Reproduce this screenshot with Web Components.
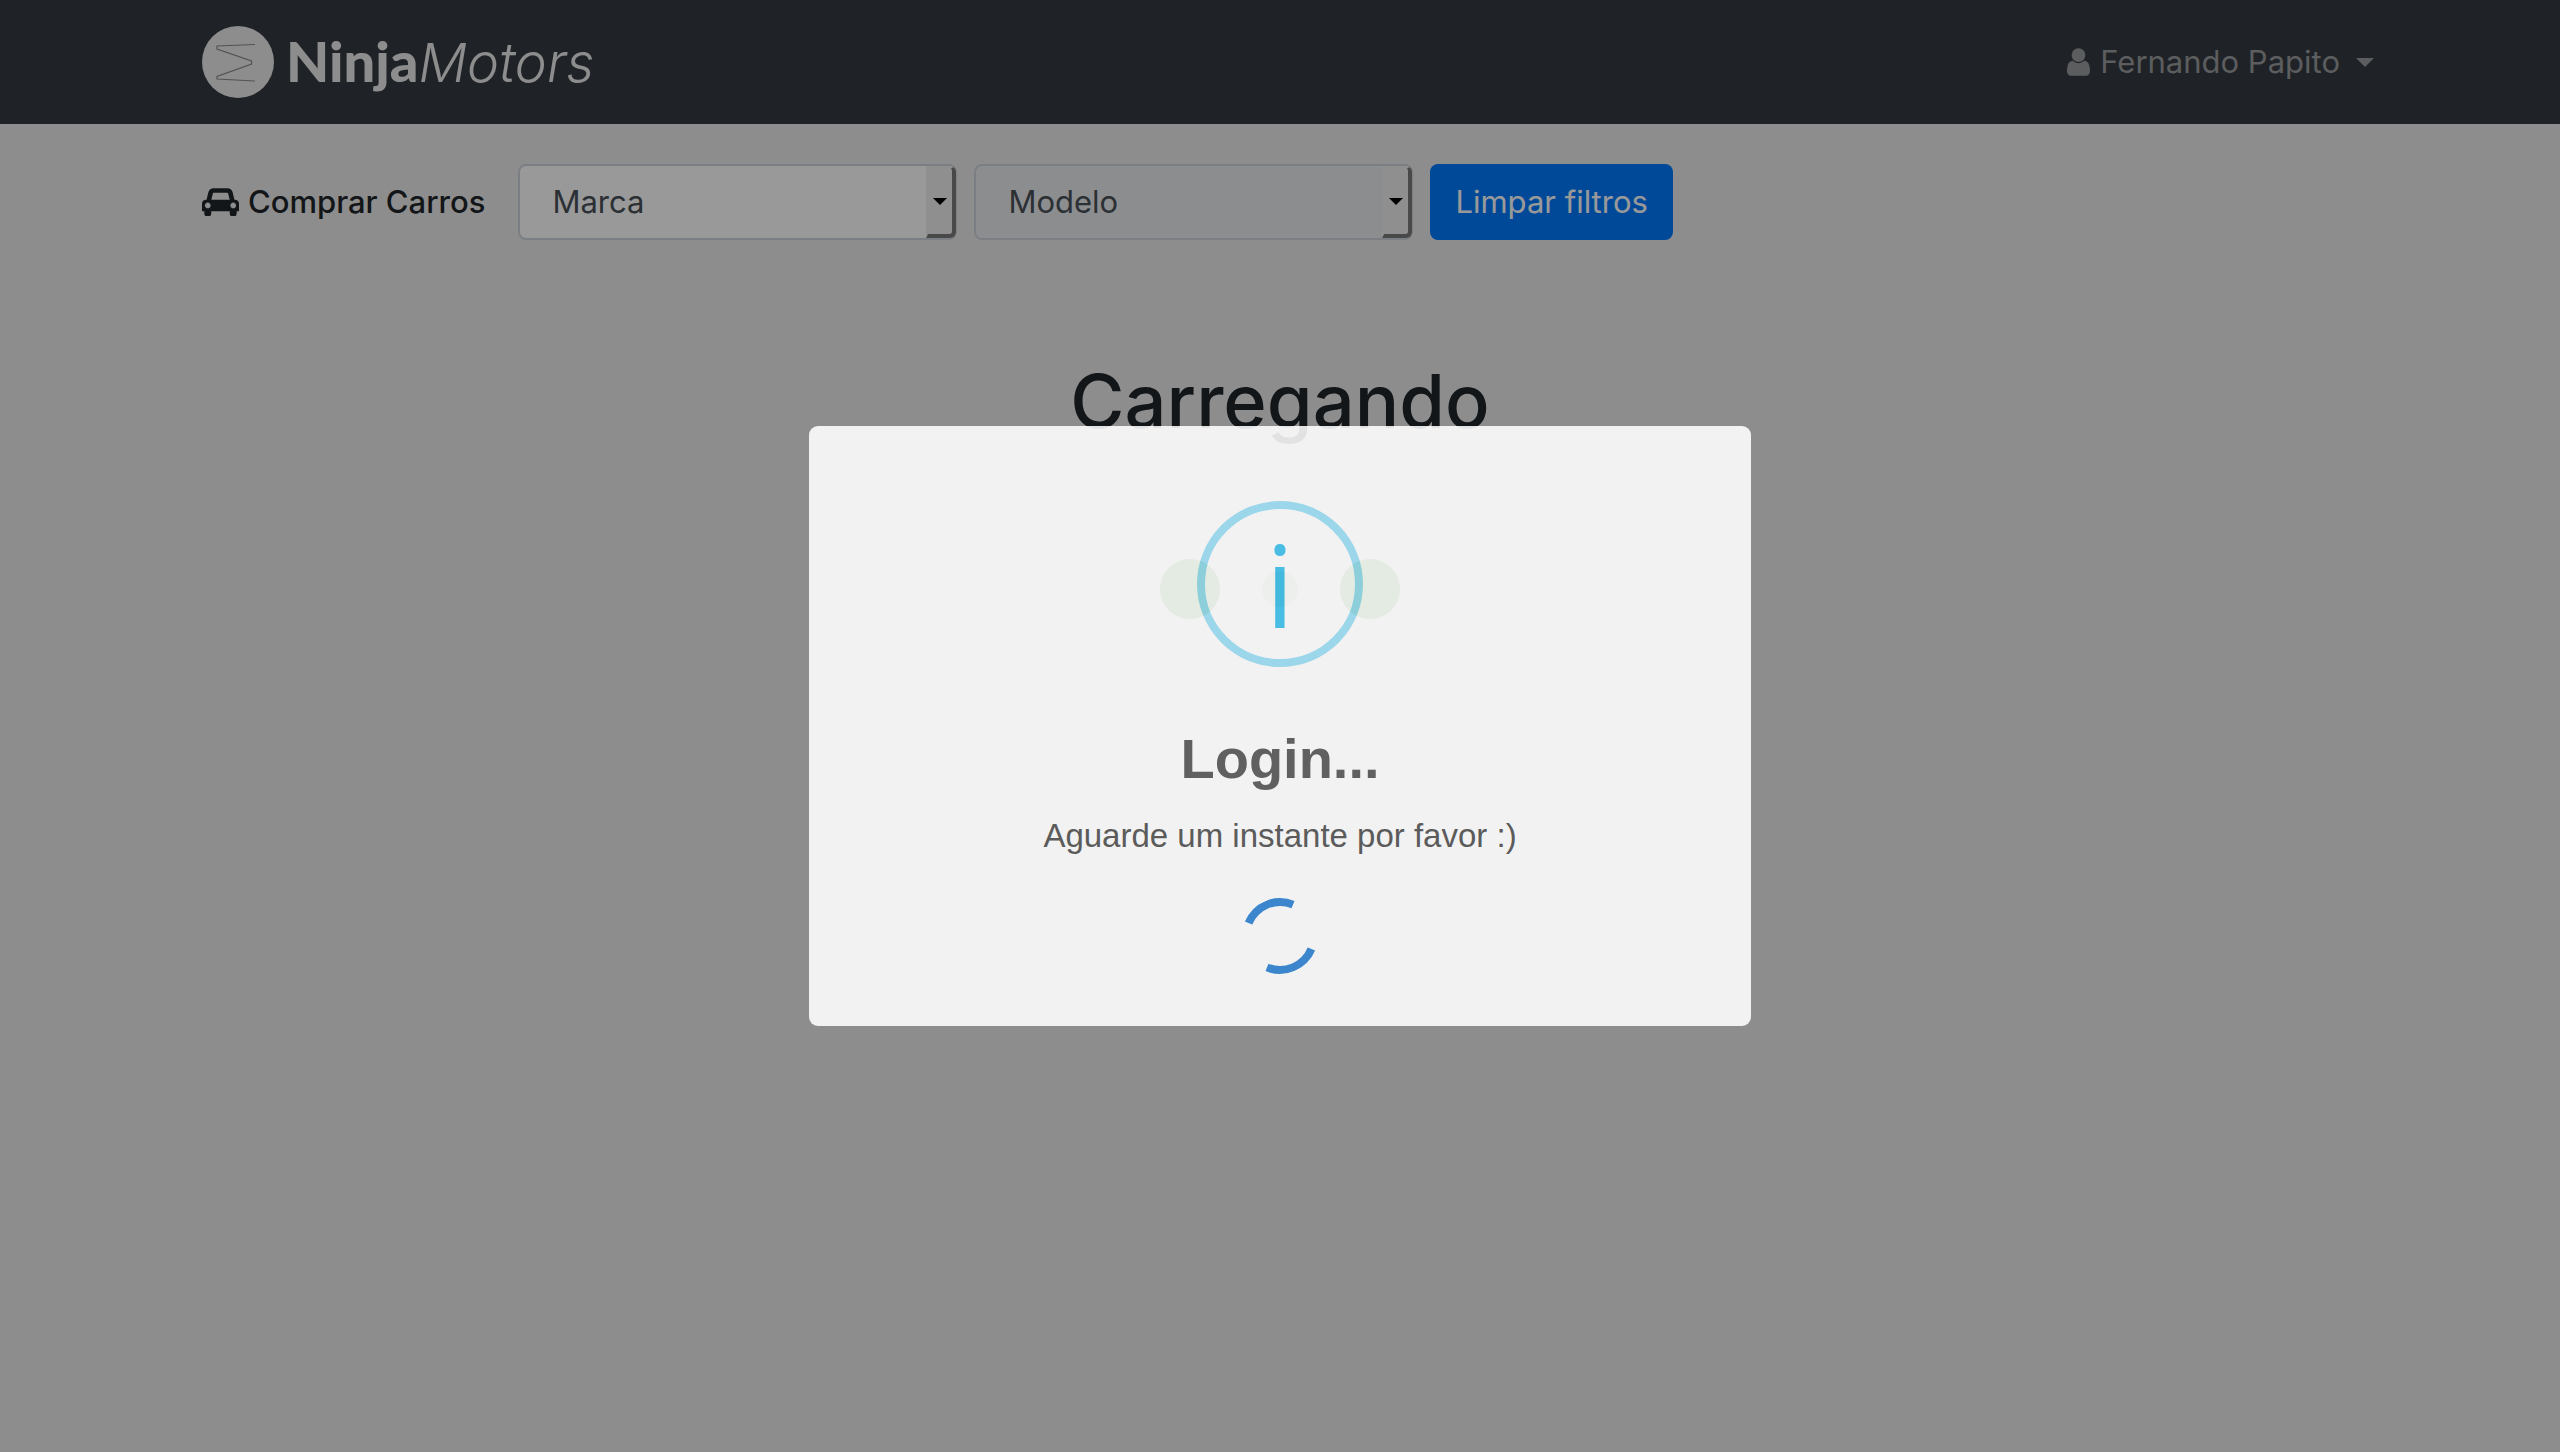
<!DOCTYPE html>
<html lang="pt-BR">
<head>
<meta charset="utf-8">
<title>NinjaMotors</title>
<style>
html { height: 100%; }
body { margin: 0; min-height: 100%; background: #ebebeb; color: #212529; font: 500 31px/48px Inter, "Liberation Sans", sans-serif; }
</style>
</head>
<body>
<nm-navbar user="Fernando Papito"></nm-navbar>
<nm-filters>
  <nm-select label="Marca"></nm-select>
  <nm-select label="Modelo" disabled></nm-select>
  <nm-button>Limpar filtros</nm-button>
</nm-filters>
<nm-loader>Carregando</nm-loader>
<nm-dialog>
  <span slot="title">Login...</span>
  Aguarde um instante por favor :)
</nm-dialog>

<script>
class NmElement extends HTMLElement {
  connectedCallback() {
    if (this.shadowRoot) return;
    this.attachShadow({ mode: 'open' }).innerHTML = this.template();
  }
}

customElements.define('nm-navbar', class extends NmElement {
  template() {
    return `<style>
      :host { display: block; background: #343a40; }
      nav { display: flex; justify-content: space-between; align-items: center; height: 124px; padding: 0 186px 0 202px; }
      a { color: inherit; text-decoration: none; }
      .brand { display: flex; align-items: center; gap: 12px; color: #ebebeb; font: 56px/72px Lato, sans-serif; }
      .brand b { font-weight: 900; }
      .brand i { font-family: Inter, sans-serif; font-size: 54px; font-weight: 300; }
      .user { display: flex; align-items: center; gap: 10px; color: #999b9e; font-weight: 400; }
      .user svg { fill: currentColor; }
      .caret { border: 9px solid transparent; border-top-color: currentColor; border-bottom: 0; margin-left: 6px; }
    </style>
    <nav>
      <a class="brand" href="#">
        <svg width="72" height="72" viewBox="0 0 72 72" aria-hidden="true">
          <circle cx="36" cy="36" r="36" fill="#ebebeb"/>
          <path d="M53 18.500L15 20V23L49.500 35V38L15 50.500V53L53 55" fill="none" stroke="#8a8a8a" stroke-width="1.200"/>
        </svg>
        <span><b>Ninja</b><i>Motors</i></span>
      </a>
      <a class="user" href="#">
        <svg width="23" height="28" viewBox="0 128 1280 1536" aria-hidden="true"><path d="M1280 1399q0 109-62.500 187t-150.500 78H213q-88 0-150.500-78T0 1399q0-85 8.500-160.500t31.500-152T98.500 955t94-89T327 832q131 128 313 128t313-128q76 0 134.500 34.500t94 89 58.500 131.500 31.500 152 8.500 160.500zM1024 512q0 159-112.500 271.500T640 896 368.500 783.500 256 512t112.500-271.500T640 128t271.500 112.500T1024 512z"/></svg>
        <span>${this.getAttribute('user')}</span><span class="caret"></span>
      </a>
    </nav>`;
  }
});

customElements.define('nm-filters', class extends NmElement {
  template() {
    return `<style>
      :host { display: block; }
      form { display: flex; align-items: center; gap: 17px; padding: 40px 202px 0; }
      h1 { display: flex; align-items: center; gap: 9px; margin: 0 16px 0 0; font: inherit; white-space: nowrap; }
      svg { fill: currentColor; }
    </style>
    <form>
      <h1>
        <svg width="37" height="28" viewBox="0 128 2048 1536" aria-hidden="true"><path d="M480 1088q0-66-47-113t-113-47-113 47-47 113 47 113 113 47 113-47 47-113zm36-320h1016l-89-357q-2-8-14-17.500t-21-9.500H640q-9 0-21 9.500T605 411zm1372 320q0-66-47-113t-113-47-113 47-47 113 47 113 113 47 113-47 47-113zm160-96v384q0 14-9 23t-23 9h-96v128q0 80-56 136t-136 56-136-56-56-136v-128H512v128q0 80-56 136t-136 56-136-56-56-136v-128H32q-14 0-23-9t-9-23V992q0-93 65.500-158.500T224 768h28l105-419q23-94 104-157.500T640 128h768q98 0 179 63.500T1691 349l105 419h28q93 0 158.500 65.500T2048 992z"/></svg>
        <span>Comprar Carros</span>
      </h1>
      <slot></slot>
    </form>`;
  }
});

customElements.define('nm-select', class extends NmElement {
  template() {
    const label = this.getAttribute('label');
    return `<style>
      :host { display: block; position: relative; width: 439px; }
      select { appearance: none; box-sizing: border-box; display: block; width: 100%; height: 76px; padding: 0 48px 0 32px;
        border: 2px solid #ced4da; border-radius: 8px; background: #fff; color: #495057; opacity: 1; font: inherit; font-weight: 400; }
      select:disabled { background: #e9ecef; }
      .arrow { position: absolute; top: 2px; right: 1px; bottom: 2px; width: 30px; box-sizing: border-box; display: flex; align-items: center; justify-content: center;
        border: solid; border-width: 2px 4px 4px 2px; border-color: #efefef #7b7b7b #7b7b7b #efefef; border-radius: 0 6px 6px 0; background: #efefef; pointer-events: none; }
      .arrow::before { content: ""; border: 7px solid transparent; border-top-color: #000; border-bottom: 0; }
    </style>
    <select aria-label="${label}" ${this.hasAttribute('disabled') ? 'disabled' : ''}><option>${label}</option></select>
    <span class="arrow"></span>`;
  }
});

customElements.define('nm-button', class extends NmElement {
  template() {
    return `<style>
      :host { display: block; }
      button { display: block; height: 76px; padding: 0 25px; border: 0; border-radius: 8px; background: #007bff; color: #fff; font: inherit; font-weight: 400; white-space: nowrap; }
    </style>
    <button type="button"><slot></slot></button>`;
  }
});

customElements.define('nm-loader', class extends NmElement {
  template() {
    return `<style>
      :host { display: flex; flex-direction: column; align-items: center; gap: 110px; padding-top: 113px; }
      h2 { margin: 0; font-size: 74px; line-height: 96px; font-weight: 500; }
      .dots { display: flex; align-items: center; gap: 42px; }
      i { width: 60px; height: 60px; border-radius: 50%; background: #2f8f2f; }
      i.mid { width: 36px; height: 36px; opacity: .4; }
    </style>
    <h2><slot></slot></h2>
    <div class="dots"><i></i><i class="mid"></i><i></i></div>`;
  }
});

customElements.define('nm-dialog', class extends NmElement {
  template() {
    return `<style>
      :host { position: fixed; inset: 0; display: flex; align-items: center; justify-content: center; background: rgba(0, 0, 0, .4); }
      section { box-sizing: border-box; width: 942px; max-width: 100%; padding: 75px 32px 52px; border-radius: 9px; background: #fff; opacity: .88;
        display: flex; flex-direction: column; align-items: center; font-family: "Liberation Sans", Arial, sans-serif; text-align: center; }
      .icon { box-sizing: border-box; width: 166px; height: 166px; border: 8px solid #9de0f6; border-radius: 50%; color: #3fc3ee; font: 500 114px/150px "Open Sans", sans-serif; }
      h2 { margin: 60px 0 0; font-size: 56px; line-height: 64px; font-weight: 700; color: #595959; }
      p { margin: 21px 0 0; font-size: 33px; line-height: 48px; font-weight: 400; color: #545454; }
      .spinner { box-sizing: border-box; width: 76px; height: 76px; margin-top: 38px; border: 8px solid; border-color: #3085d6 transparent; border-radius: 50%; transform: rotate(-22.500deg); }
    </style>
    <section role="dialog" aria-labelledby="title">
      <div class="icon">i</div>
      <h2 id="title"><slot name="title"></slot></h2>
      <p><slot></slot></p>
      <div class="spinner"></div>
    </section>`;
  }
});
</script>
</body>
</html>
